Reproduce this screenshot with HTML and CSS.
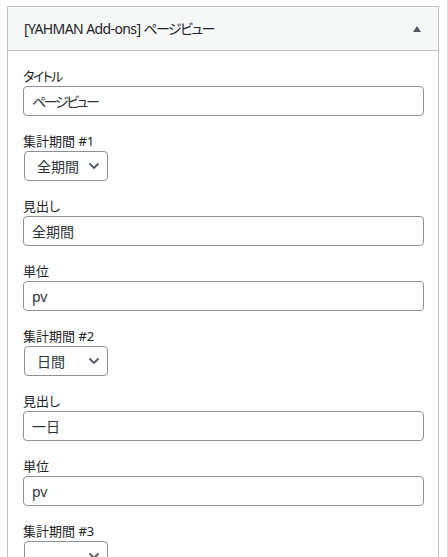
FILE: index.html
```html
<!DOCTYPE html>
<html lang="ja">
<head>
    <meta charset="UTF-8">
    <meta name="viewport" content="width=device-width, initial-scale=1.0">
    <title>ページビュー ウィジェット</title>
    <link rel="stylesheet" href="styles.css">
</head>
<body>
    <div class="page">
        <div class="widget">
            <div class="widget-top">
                <h3 class="widget-title">[YAHMAN Add-ons] <span class="kana">ページビュー</span></h3>
                <span class="toggle"></span>
            </div>

            <div class="widget-inside">
                <!-- タイトル -->
                <div class="field">
                    <label for="title"><span class="kana">タイトル</span></label>
                    <input type="text" id="title" class="kana-input" value="ページビュー">
                </div>

                <!-- 集計期間 #1 -->
                <div class="field">
                    <label for="period1">集計期間 #1</label>
                    <div class="select-wrap">
                        <select id="period1">
                            <option selected>全期間</option>
                            <option>日間</option>
                            <option>週間</option>
                            <option>月間</option>
                        </select>
                        <svg class="chevron" width="12" height="8" viewBox="0 0 12 8"><path d="M1.5 1.5 L6 6 L10.5 1.5" fill="none" stroke="#50575e" stroke-width="1.8"/></svg>
                    </div>
                </div>
                <div class="field">
                    <label for="heading1">見出し</label>
                    <input type="text" id="heading1" value="全期間">
                </div>
                <div class="field">
                    <label for="unit1">単位</label>
                    <input type="text" id="unit1" value="pv">
                </div>

                <!-- 集計期間 #2 -->
                <div class="field">
                    <label for="period2">集計期間 #2</label>
                    <div class="select-wrap">
                        <select id="period2">
                            <option>全期間</option>
                            <option selected>日間</option>
                            <option>週間</option>
                            <option>月間</option>
                        </select>
                        <svg class="chevron" width="12" height="8" viewBox="0 0 12 8"><path d="M1.5 1.5 L6 6 L10.5 1.5" fill="none" stroke="#50575e" stroke-width="1.8"/></svg>
                    </div>
                </div>
                <div class="field">
                    <label for="heading2">見出し</label>
                    <input type="text" id="heading2" value="一日">
                </div>
                <div class="field">
                    <label for="unit2">単位</label>
                    <input type="text" id="unit2" value="pv">
                </div>

                <!-- 集計期間 #3 -->
                <div class="field">
                    <label for="period3">集計期間 #3</label>
                    <div class="select-wrap">
                        <select id="period3">
                            <option selected></option>
                            <option>全期間</option>
                            <option>日間</option>
                        </select>
                        <svg class="chevron" width="12" height="8" viewBox="0 0 12 8"><path d="M1.5 1.5 L6 6 L10.5 1.5" fill="none" stroke="#50575e" stroke-width="1.8"/></svg>
                    </div>
                </div>
            </div>
        </div>
    </div>
</body>
</html>
```

FILE: styles.css
```css
* {
    box-sizing: border-box;
}
body {
    margin: 0;
    background: #fff;
    color: #1d2327;
    font-family: "Segoe UI", "Noto Sans", "Noto Sans CJK JP", sans-serif;
    font-feature-settings: "palt";
    font-size: 13px;
}
.page {
    width: 448px;
    padding: 6px 8px 0 7px;
    border-right: 1px solid #dcdcde;
    min-height: 557px;
}
.widget {
    width: 432px;
    border: 1px solid #c3c4c7;
    background: #fff;
}
.widget-top {
    display: flex;
    align-items: center;
    justify-content: space-between;
    height: 44px;
    padding: 0 16px 0 16px;
    background: #f6f7f7;
    border-bottom: 1px solid #c3c4c7;
}
.widget-title {
    margin: 0;
    font-size: 14px;
    font-weight: normal;
    line-height: 20px;
    letter-spacing: -0.6px;
}
.kana {
    letter-spacing: -1.6px;
}
.toggle {
    width: 0;
    height: 0;
    margin-right: 1px;
    border-left: 4px solid transparent;
    border-right: 4px solid transparent;
    border-bottom: 6px solid #50575e;
}
.widget-inside {
    padding: 16px 14px 0 15px;
}
.field {
    margin-bottom: 16px;
}
.field label {
    display: block;
    line-height: 19px;
}
input[type="text"] {
    display: block;
    width: 100%;
    height: 30px;
    padding: 0 8px;
    border: 1px solid #8c8f94;
    border-radius: 4px;
    font: inherit;
    font-size: 14px;
    font-feature-settings: "palt";
    color: #2c3338;
}
input.kana-input {
    letter-spacing: -2.4px;
}
.select-wrap {
    position: relative;
    width: 84px;
    margin-left: 1px;
}
select {
    display: block;
    width: 84px;
    height: 30px;
    padding: 0 24px 0 12px;
    border: 1px solid #8c8f94;
    border-radius: 4px;
    background: #fff;
    font: inherit;
    font-size: 14px;
    color: #2c3338;
    -webkit-appearance: none;
    appearance: none;
}
.chevron {
    position: absolute;
    right: 8px;
    top: 11px;
    pointer-events: none;
}
```
